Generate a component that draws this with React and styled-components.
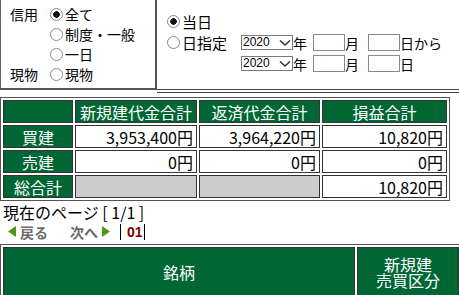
import React from "react";
import styled, { createGlobalStyle } from "styled-components";

const GlobalStyle = createGlobalStyle`
  html, body {
    margin: 0;
    padding: 0;
    overflow: hidden;
    background: #fff;
  }
  body {
    font-family: "Noto Sans CJK JP", "Liberation Sans", sans-serif;
    font-size: 14px;
    color: #000;
  }
`;

const summary = [
  { label: "買建", open: "3,953,400円", close: "3,964,220円", pl: "10,820円" },
  { label: "売建", open: "0円", close: "0円", pl: "0円" },
  { label: "総合計", open: null, close: null, pl: "10,820円" },
];

const Page = styled.div`
  width: 459px;
`;

const Filter = styled.div`
  display: flex;
  height: 93px;
`;

const KindBox = styled.div`
  width: 157px;
  height: 90px;
  box-sizing: border-box;
  border-left: 1px solid #666;
  border-right: 2px solid #555;
  border-bottom: 2px solid #555;
  padding: 4px 0 0 9px;
  display: grid;
  grid-template-columns: 40px auto;
  grid-auto-rows: 20px;
  align-items: center;
  align-content: start;
`;

const DateBox = styled.div`
  flex: 1;
  height: 93px;
  box-sizing: border-box;
  border-bottom: 4px double #444;
  padding: 11px 0 0 10px;
`;

const Label = styled.span`
  line-height: 20px;
`;

const Choice = styled.label`
  display: flex;
  align-items: center;
  line-height: 20px;
  grid-column: 2;
  white-space: nowrap;
  font-size: ${(p) => p.$size || 14}px;
`;

const Radio = styled.input.attrs({ type: "radio" })`
  appearance: none;
  width: 13px;
  height: 13px;
  margin: 0 2px 0 0;
  border: 1px solid #8a8a8a;
  border-radius: 50%;
  background: #fff;
  flex: none;
  &:checked {
    background: radial-gradient(circle, #111 0 3px, #fff 3.5px);
  }
`;

const DateRow = styled.div`
  display: flex;
  align-items: center;
  height: 21px;
`;

const RowLead = styled.div`
  width: 74px;
  flex: none;
`;

const SelectWrap = styled.span`
  display: inline-flex;
  align-items: center;
  width: 52px;
  height: 15px;
  border: 1px solid #7a7a7a;
  box-sizing: border-box;
  background: #fff;
`;

const Select = styled.select`
  appearance: none;
  border: none;
  background: transparent;
  font-family: "Liberation Sans", sans-serif;
  font-size: 12px;
  width: 37px;
  padding: 0 0 0 1px;
  height: 13px;
  line-height: 13px;
  outline: none;
`;

const Unit = styled.span`
  line-height: 20px;
`;

const Field = styled.input`
  width: 32px;
  height: 17px;
  box-sizing: border-box;
  border: 1px solid #888;
  margin: 0 0 0 ${(p) => p.$gap || 6}px;
  padding: 0;
`;

const SumTable = styled.table`
  margin-top: 4px;
  width: 450px;
  border: 1px solid #555;
  border-spacing: 2px;
  table-layout: fixed;
  background: #fff;
  font-size: 16px;
`;

const Th = styled.th`
  height: 23px;
  padding: 0;
  box-sizing: border-box;
  background: #006633;
  color: #fff;
  font-weight: normal;
  border: 1px solid #333;
  text-align: center;
  line-height: 20px;
`;

const Td = styled.td`
  height: 23px;
  padding: 0 3px 0 0;
  box-sizing: border-box;
  background: ${(p) => (p.$blank ? "#cccccc" : "#fff")};
  border: 1px solid #333;
  text-align: right;
  line-height: 20px;
`;

const Pager = styled.div`
  padding-left: 3px;
  line-height: 20px;
  margin-top: 1px;
  font-size: 16px;
`;

const NavRow = styled.div`
  display: flex;
  align-items: center;
  padding-left: 8px;
  height: 19px;
`;

const NavLink = styled.span`
  display: inline-flex;
  align-items: center;
  gap: 4px;
  color: #6a6a6a;
  font-weight: bold;
  margin-right: ${(p) => p.$mr || 0}px;
`;

const Bar = styled.span`
  display: inline-block;
  width: 1px;
  height: 16px;
  background: #000;
  margin: 0 ${(p) => p.$r || 0}px 0 ${(p) => p.$l || 0}px;
`;

const Current = styled.span`
  color: #7a0000;
  font-weight: bold;
  font-family: "Liberation Sans", sans-serif;
  font-size: 14px;
`;

const ListTable = styled.table`
  margin-top: 3px;
  width: 462px;
  border: 1px solid #555;
  border-spacing: 2px;
  table-layout: fixed;
  font-size: 16px;
`;

const ListTh = styled.th`
  height: 48px;
  padding: 0;
  background: #006633;
  color: #fff;
  font-weight: normal;
  border: 1px solid #333;
  line-height: 16px;
  vertical-align: middle;
`;

const Tri = ({ dir }) => (
  <svg width="8" height="11" viewBox="0 0 8 11">
    <path d={dir === "left" ? "M8 0 L0 5.5 L8 11 Z" : "M0 0 L8 5.5 L0 11 Z"} fill="#4c9a14" />
  </svg>
);

const Chevron = () => (
  <svg width="12" height="8" viewBox="0 0 12 8">
    <path d="M1 1.5 L6 6 L11 1.5" fill="none" stroke="#333" strokeWidth="1.6" />
  </svg>
);

const YearSelect = () => (
  <SelectWrap>
    <Select defaultValue="2020">
      <option>2020</option>
      <option>2019</option>
    </Select>
    <Chevron />
  </SelectWrap>
);

export default function App() {
  return (
    <Page>
      <GlobalStyle />
      <Filter>
        <KindBox>
          <Label>信用</Label>
          <Choice><Radio name="kind" defaultChecked />全て</Choice>
          <Choice><Radio name="kind" />制度・一般</Choice>
          <Choice><Radio name="kind" />一日</Choice>
          <Label>現物</Label>
          <Choice><Radio name="kind" />現物</Choice>
        </KindBox>
        <DateBox>
          <DateRow>
            <Choice $size={15}><Radio name="day" defaultChecked />当日</Choice>
          </DateRow>
          <DateRow>
            <RowLead>
              <Choice $size={15}><Radio name="day" />日指定</Choice>
            </RowLead>
            <YearSelect />
            <Unit>年</Unit>
            <Field />
            <Unit>月</Unit>
            <Field $gap={9} />
            <Unit>日から</Unit>
          </DateRow>
          <DateRow>
            <RowLead />
            <YearSelect />
            <Unit>年</Unit>
            <Field />
            <Unit>月</Unit>
            <Field $gap={9} />
            <Unit>日</Unit>
          </DateRow>
        </DateBox>
      </Filter>

      <SumTable>
        <colgroup>
          <col style={{ width: 70 }} />
          <col style={{ width: 122 }} />
          <col style={{ width: 121 }} />
          <col style={{ width: 125 }} />
        </colgroup>
        <thead>
          <tr>
            <Th />
            <Th>新規建代金合計</Th>
            <Th>返済代金合計</Th>
            <Th>損益合計</Th>
          </tr>
        </thead>
        <tbody>
          {summary.map((r) => (
            <tr key={r.label}>
              <Th>{r.label}</Th>
              <Td $blank={r.open === null}>{r.open}</Td>
              <Td $blank={r.close === null}>{r.close}</Td>
              <Td>{r.pl}</Td>
            </tr>
          ))}
        </tbody>
      </SumTable>

      <Pager>現在のページ [ 1/1 ]</Pager>
      <NavRow>
        <NavLink $mr={22}><Tri dir="left" />戻る</NavLink>
        <NavLink>次へ<Tri dir="right" /></NavLink>
        <Bar $l={10} $r={6} />
        <Current>01</Current>
        <Bar $l={1} />
      </NavRow>

      <ListTable>
        <colgroup>
          <col style={{ width: 352 }} />
          <col style={{ width: 102 }} />
        </colgroup>
        <thead>
          <tr>
            <ListTh>銘柄</ListTh>
            <ListTh>新規建<br />売買区分</ListTh>
          </tr>
        </thead>
      </ListTable>
    </Page>
  );
}
